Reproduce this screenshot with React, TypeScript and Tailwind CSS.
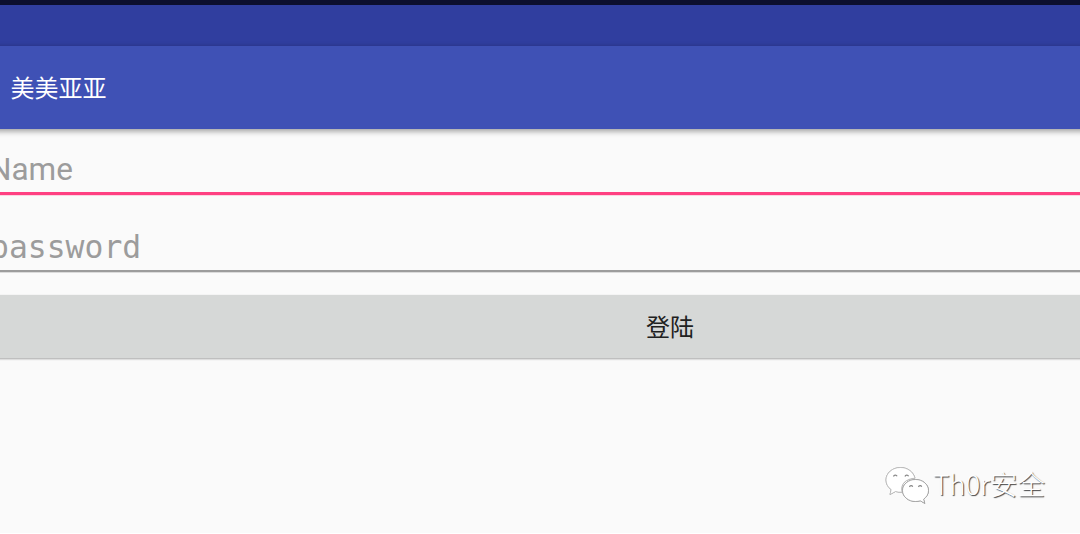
import React, { useState } from 'react'

const WechatMark = () => (
  <svg
    className="w-[46px] h-[42px] overflow-visible"
    viewBox="0 0 46 42"
    fill="#fff"
  >
    <g className="drop-shadow-[0_0.6px_0.5px_rgba(0,0,0,0.5)]" strokeWidth="0.7">
      <path
        stroke="#bbb"
        d="M17.500 2.500C9.500 2.500 3 8 3 15c0 4 2 7.300 5.200 9.600L7 29.500l5.500-3c2 .6 4.500.8 6.500.6C17 19 23 13.500 32 13.200 30.500 7 24.500 2.500 17.500 2.500z"
      />
      <path
        stroke="#999"
        d="M45.500 25.500c0-6.200-6-11-13-11s-13 4.800-13 11 6 11 13 11c1.700 0 3.300-.3 4.800-.7l4.500 2.600-1.200-4.200c3-2.100 4.900-5.200 4.900-8.700z"
      />
    </g>
    <g fill="none" stroke="#888" strokeWidth="1.200">
      <path d="M10.500 11.500a1.900 1.900 0 0 1 3.600-.3M22 11.500a1.900 1.900 0 0 1 3.600-.3" />
      <path d="M26.500 22a1.700 1.700 0 0 1 3.200-.3M35.500 22a1.700 1.700 0 0 1 3.200-.3" />
    </g>
  </svg>
)

export default function Login() {
  const [name, setName] = useState('')
  const [password, setPassword] = useState('')

  return (
    <div className="flex flex-col w-full h-[534px] overflow-hidden bg-[#fafafa] border-b border-white">
      <div className="shrink-0 h-[5px] bg-[#0c0f2e]"></div>
      <div className="shrink-0 h-[41px] bg-[#303e9f]"></div>
      <header className="flex shrink-0 items-center h-[83px] -mx-3 pl-[22.500px] pb-0.5 bg-[#3f51b5] shadow-[0_2px_6px_rgba(0,0,0,0.4)]">
        <h1 className="text-2xl leading-none text-white font-['Noto_Sans_CJK_SC',sans-serif]">
          美美亚亚
        </h1>
      </header>
      <form className="flex flex-col -mx-3">
        <input
          className="h-[66px] pt-[18px] pl-px outline-none border-b-[3px] border-[#ff4081] bg-transparent text-[31.500px] placeholder-[#9c9c9c] shadow-[0_1px_0_-0.5px_rgba(255,64,129,0.4)] font-[Roboto,sans-serif]"
          type="text"
          placeholder="Name"
          value={name}
          onChange={(e) => setName(e.target.value)}
        />
        <input
          className="h-[77px] pt-[28px] pl-0.5 outline-none border-b-2 border-[#9c9c9c] bg-transparent text-[31.400px] placeholder-[#9c9c9c] shadow-[0_1px_0_rgba(0,0,0,0.12)] font-['DejaVu_Sans_Mono',monospace]"
          type="password"
          placeholder="password"
          value={password}
          onChange={(e) => setPassword(e.target.value)}
        />
        <button
          className="h-[63px] mt-[23px] pl-[260px] pb-0.5 bg-[#d6d8d7] text-2xl leading-none text-[#212121] shadow-[0_1px_2px_rgba(0,0,0,0.35)] font-['Noto_Sans_CJK_SC',sans-serif]"
          type="button"
        >
          登陆
        </button>
      </form>
      <div className="flex items-center self-end mt-auto mr-[35px] mb-[26px]">
        <WechatMark />
        <span className="ml-1 pb-1 text-[27.500px] leading-none text-white [text-shadow:1px_1px_1px_rgba(0,0,0,0.75)] font-['Noto_Sans_CJK_SC',sans-serif] font-light">
          Th0r安全
        </span>
      </div>
    </div>
  )
}
